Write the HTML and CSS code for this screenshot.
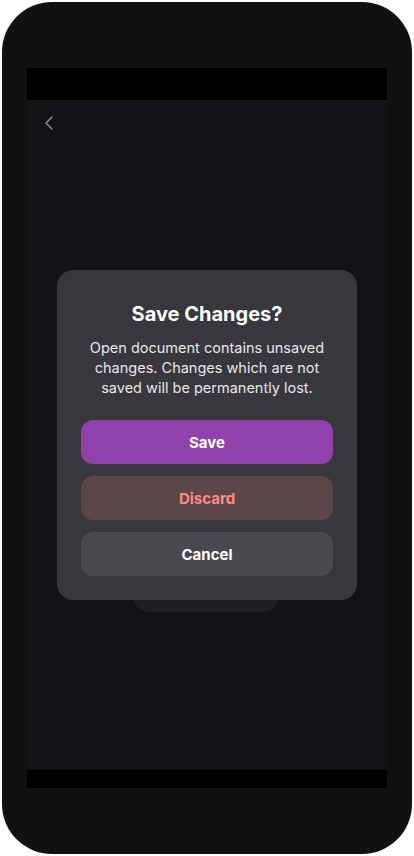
FILE: index.html
```html
<!DOCTYPE html>
<html lang="en">
<head>
    <meta charset="UTF-8">
    <meta name="viewport" content="width=device-width, initial-scale=1.0">
    <title>Save Changes</title>
    <link rel="stylesheet" href="styles.css">
</head>
<body>
    <div class="phone">
        <div class="screen">
            <div class="status-bar"></div>
            <div class="content">
                <a class="back" href="#">
                    <svg width="16" height="16" viewBox="0 0 16 16">
                        <path d="M10 2 L4 8 L10 14" fill="none" stroke="#8b8a90" stroke-width="1.6" stroke-linecap="round" stroke-linejoin="round"/>
                    </svg>
                </a>
                <div class="sheet-peek"></div>
                <div class="dialog">
                    <h2>Save Changes?</h2>
                    <p>Open document contains unsaved changes. Changes which are not saved will be permanently lost.</p>
                    <div class="actions">
                        <button class="btn save">Save</button>
                        <button class="btn discard">Discard</button>
                        <button class="btn cancel">Cancel</button>
                    </div>
                </div>
            </div>
            <div class="nav-bar"></div>
        </div>
    </div>
</body>
</html>
```

FILE: styles.css
```css
body {
    margin: 0;
    padding: 2px;
    background-color: #fff;
    font-family: Inter, "Noto Sans", sans-serif;
}
.phone {
    width: 360px;
    height: 720px;
    padding: 66px 25px;
    background-color: #111111;
    border-radius: 50px;
}
.screen {
    display: flex;
    flex-direction: column;
    height: 100%;
    background-color: #131217;
}
.status-bar {
    height: 32px;
    background-color: #000;
}
.nav-bar {
    height: 18px;
    background-color: #000;
}
.content {
    flex: 1;
    position: relative;
    display: flex;
    align-items: center;
    justify-content: center;
}
.back {
    position: absolute;
    left: 15px;
    top: 15px;
    display: block;
    width: 16px;
    height: 16px;
}
.sheet-peek {
    position: absolute;
    left: 106px;
    top: 460px;
    width: 146px;
    height: 52px;
    background-color: #1f1e23;
    border-radius: 0 0 16px 16px;
}
.dialog {
    position: relative;
    width: 252px;
    padding: 28px 24px 24px;
    background-color: #38373c;
    border-radius: 16px;
    text-align: center;
}
.dialog h2 {
    margin: 0;
    font-size: 20px;
    line-height: 32px;
    font-weight: 700;
    color: #fff;
}
.dialog p {
    margin: 8px 0 0;
    font-size: 14.5px;
    line-height: 20px;
    color: #e8e7ea;
}
.actions {
    display: flex;
    flex-direction: column;
    gap: 12px;
    margin-top: 22px;
}
.btn {
    height: 44px;
    border: none;
    border-radius: 12px;
    font-family: Inter, "Noto Sans", sans-serif;
    font-size: 15px;
    font-weight: 700;
    cursor: pointer;
}
.save {
    background-color: #9141ac;
    color: #fff;
}
.discard {
    background-color: #5c4647;
    color: #ff8a80;
}
.cancel {
    background-color: #4a494e;
    color: #fff;
}
```
